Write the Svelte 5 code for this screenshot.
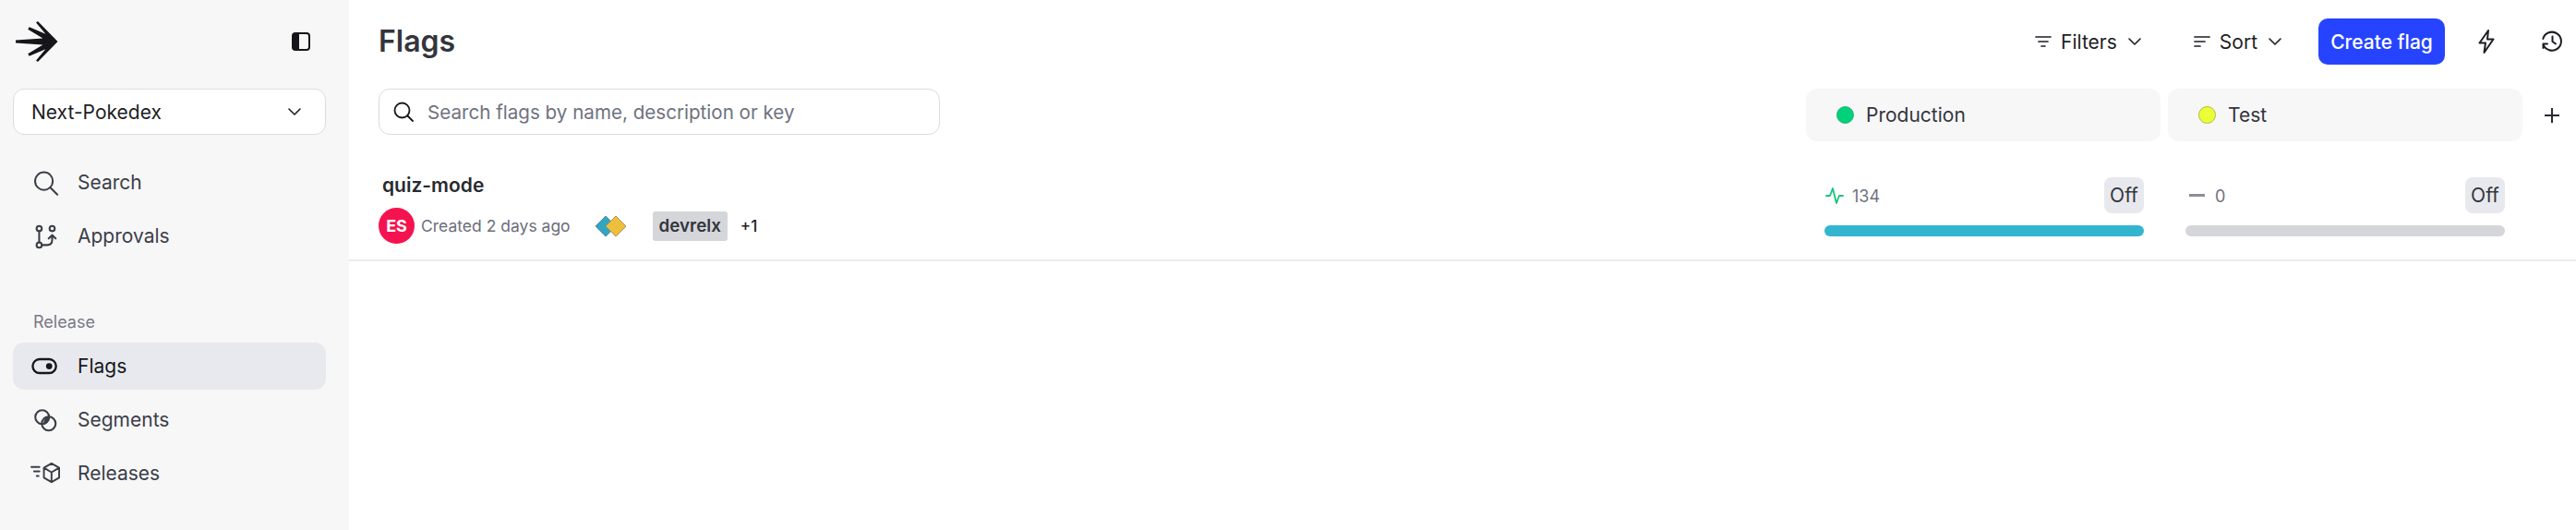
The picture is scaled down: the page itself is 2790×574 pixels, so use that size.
<script>
  const topNav = [
    { label: 'Search', icon: 'search' },
    { label: 'Approvals', icon: 'approvals' }
  ];
  const releaseNav = [
    { label: 'Flags', icon: 'flags', active: true },
    { label: 'Segments', icon: 'segments' },
    { label: 'Releases', icon: 'releases' }
  ];
</script>

{#snippet navIcon(name)}
  {#if name === 'search'}
    <svg class="nav-icon" viewBox="0 0 32 32" fill="none" stroke="currentColor" stroke-width="2.2" stroke-linecap="round">
      <circle cx="14.5" cy="14" r="10.2" />
      <path d="M22 21.5l8 8" />
    </svg>
  {:else if name === 'approvals'}
    <svg class="nav-icon" viewBox="0 0 32 32" fill="none" stroke="currentColor" stroke-width="2.2" stroke-linecap="round" stroke-linejoin="round">
      <circle cx="9" cy="7" r="3" />
      <circle cx="9" cy="26" r="3" />
      <circle cx="24" cy="7" r="3" />
      <path d="M9 10v13M12 26h6c4 0 6-2.500 6-6v-5M20 18.500l4-4 4 4" />
    </svg>
  {:else if name === 'flags'}
    <svg class="nav-icon" viewBox="0 0 32 32" fill="none" stroke="currentColor" stroke-width="2.500">
      <rect x="1.500" y="7.500" width="27" height="16" rx="8" />
      <circle cx="20.500" cy="15.500" r="3.600" fill="currentColor" stroke="none" />
    </svg>
  {:else if name === 'segments'}
    <svg class="nav-icon" viewBox="0 0 32 32" fill="none" stroke="currentColor" stroke-width="2.200">
      <circle cx="12.500" cy="12.500" r="8" />
      <circle cx="20" cy="20" r="8" />
      <path d="M14 20.500c3.500 0 6.500-3 6.500-8.500-3.500 0-6.500 3-6.500 8.500z" fill="currentColor" stroke="none" />
    </svg>
  {:else if name === 'releases'}
    <svg class="nav-icon wide" viewBox="0 0 34 32" fill="none" stroke="currentColor" stroke-width="2" stroke-linecap="round" stroke-linejoin="round">
      <path d="M1 9h9M4 14h6M7 19h2" />
      <path d="M23.500 5l8.500 5v11l-8.500 5-8.500-5V10zM15 10l8.500 5 8.500-5M23.500 15v11" />
    </svg>
  {/if}
{/snippet}

{#snippet chevron()}
  <svg class="chevron" viewBox="0 0 16 10" fill="none" stroke="currentColor" stroke-width="1.600" stroke-linecap="round" stroke-linejoin="round">
    <path d="M2 2l6 6 6-6" />
  </svg>
{/snippet}

<div class="app">
  <aside class="sidebar">
    <div class="brand">
      <svg class="logo" viewBox="0 0 48 46" fill="#16161a">
        <path d="M46.500 23L24.500 0.500 22.500 2 33 14.500 15 7 13.500 9.500 30 19.500 0 21.500 0 24.500 30 26.500 13.500 36.500 15 39 33 31.500 22.500 44 24.500 45.500z" />
      </svg>
      <svg class="collapse" viewBox="0 0 20 20" fill="none" stroke="#16161a" stroke-width="2">
        <rect x="1" y="1" width="18" height="18" rx="3" />
        <path d="M1 4a3 3 0 0 1 3-3h4v18H4a3 3 0 0 1-3-3z" fill="#16161a" stroke="none" />
      </svg>
    </div>

    <button class="project" type="button">
      <span>Next-Pokedex</span>
      {@render chevron()}
    </button>

    <nav class="nav first">
      {#each topNav as item}
        <div class="nav-item">
          <span class="icon-slot">{@render navIcon(item.icon)}</span>
          <span>{item.label}</span>
        </div>
      {/each}
    </nav>

    <div class="section-label">Release</div>
    <nav class="nav">
      {#each releaseNav as item}
        <div class="nav-item" class:active={item.active}>
          <span class="icon-slot">{@render navIcon(item.icon)}</span>
          <span>{item.label}</span>
        </div>
      {/each}
    </nav>
  </aside>

  <main class="content">
    <header class="page-header">
      <h1>Flags</h1>
      <div class="actions">
        <button class="ghost filters" type="button">
          <svg class="tool-icon" viewBox="0 0 18 14" fill="none" stroke="currentColor" stroke-width="1.700" stroke-linecap="round">
            <path d="M1 2h16M4 7h10M7 12h4" />
          </svg>
          <span>Filters</span>
          {@render chevron()}
        </button>
        <button class="ghost sort" type="button">
          <svg class="tool-icon" viewBox="0 0 18 14" fill="none" stroke="currentColor" stroke-width="1.700" stroke-linecap="round">
            <path d="M1 2h16M1 7h11M1 12h6" />
          </svg>
          <span>Sort</span>
          {@render chevron()}
        </button>
        <button class="create" type="button">Create flag</button>
        <svg class="bolt" viewBox="0 0 18 26" fill="none" stroke="#1d1e23" stroke-width="2" stroke-linejoin="round">
          <path d="M11 1L1.500 14.500H8L6.500 25 16.500 10.500H10z" />
        </svg>
        <svg class="history" viewBox="0 0 24 24" fill="none" stroke="#1d1e23" stroke-width="2" stroke-linecap="round" stroke-linejoin="round">
          <path d="M2.500 15a10 10 0 1 0-.2-6M2.500 19v-4.500H7M12.500 6.500V12l3.500 2.500" />
        </svg>
      </div>
    </header>

    <div class="toolbar">
      <div class="search">
        <svg class="search-icon" viewBox="0 0 22 22" fill="none" stroke="#16161a" stroke-width="1.800" stroke-linecap="round">
          <circle cx="9.500" cy="9.500" r="8" />
          <path d="M15.500 15.500l5.500 5.500" />
        </svg>
        <span>Search flags by name, description or key</span>
      </div>
      <div class="env-tabs">
        <div class="env-tab">
          <span class="dot green"></span>
          <span>Production</span>
        </div>
        <div class="env-tab">
          <span class="dot yellow"></span>
          <span>Test</span>
        </div>
        <svg class="plus" viewBox="0 0 18 18" fill="none" stroke="#282a30" stroke-width="2">
          <path d="M9 1v16M1 9h16" />
        </svg>
      </div>
    </div>

    <section class="flag-row">
      <div class="flag-info">
        <div class="flag-name">quiz-mode</div>
        <div class="flag-meta">
          <span class="avatar">ES</span>
          <span class="created">Created 2 days ago</span>
          <svg class="diamonds" viewBox="0 0 34 24">
            <path d="M11.500 1L23 12 11.500 23 0.500 12z" fill="#33a5c4" stroke="#5f8894" />
            <path d="M22.500 1L33.500 12 22.500 23 11.500 12z" fill="#eebf3c" stroke="#a59155" />
          </svg>
          <span class="tag">devrelx</span>
          <span class="more">+1</span>
        </div>
      </div>

      <div class="env-status">
        <div class="status-cell">
          <div class="status-top">
            <svg class="pulse" viewBox="0 0 20 20" fill="none" stroke="#19c37d" stroke-width="1.800" stroke-linejoin="round" stroke-linecap="round">
              <path d="M1 10h4l3-8 4 16 3-8h4" />
            </svg>
            <span class="count">134</span>
            <span class="off">Off</span>
          </div>
          <div class="bar on"></div>
        </div>
        <div class="status-cell">
          <div class="status-top">
            <span class="dash"></span>
            <span class="count">0</span>
            <span class="off">Off</span>
          </div>
          <div class="bar"></div>
        </div>
      </div>
    </section>
  </main>
</div>

<style>
  :global(body) {
    margin: 0;
    background: #fff;
  }

  .app {
    display: flex;
    height: 574px;
    font-family: Inter, "Liberation Sans", sans-serif;
    color: #282a30;
    overflow: hidden;
  }

  .sidebar {
    width: 378px;
    flex-shrink: 0;
    background: #f7f7f8;
    padding: 0 25px 0 14px;
    box-sizing: border-box;
  }

  .brand {
    display: flex;
    align-items: center;
    justify-content: space-between;
    height: 96px;
    padding: 0 17px 6px 3px;
    box-sizing: border-box;
  }

  .logo {
    width: 47px;
    height: 46px;
  }

  .collapse {
    width: 20px;
    height: 20px;
  }

  .project {
    display: flex;
    align-items: center;
    justify-content: space-between;
    width: 100%;
    height: 50px;
    padding: 0 25px 0 19px;
    background: #fff;
    border: 1.500px solid #dcdcdf;
    border-radius: 12px;
    font: 400 21px Inter, sans-serif;
    color: #1d1e23;
    box-sizing: border-box;
  }

  .chevron {
    width: 16px;
    height: 10px;
  }

  .project .chevron {
    color: #1d1e23;
  }

  .nav {
    display: flex;
    flex-direction: column;
    gap: 7px;
  }

  .nav.first {
    margin-top: 26px;
  }

  .nav-item {
    display: flex;
    align-items: center;
    height: 51px;
    border-radius: 12px;
    font-size: 21px;
    color: #3b3e47;
  }

  .nav-item.active {
    background: #e8e9ee;
    color: #16171b;
  }

  .icon-slot {
    display: flex;
    justify-content: center;
    align-items: center;
    width: 70px;
    flex-shrink: 0;
    margin-right: 0;
  }

  .nav-icon {
    width: 30px;
    height: 30px;
  }

  .nav-icon.wide {
    width: 33px;
    height: 31px;
  }

  .section-label {
    margin: 55px 0 0 22px;
    height: 35px;
    font-size: 18px;
    line-height: 26px;
    color: #777a85;
  }

  .content {
    flex: 1;
    min-width: 0;
  }

  .page-header {
    display: flex;
    align-items: center;
    justify-content: space-between;
    height: 90px;
    padding: 0 14px 0 32px;
    box-sizing: border-box;
  }

  h1 {
    margin: 0 0 2px;
    font-size: 32px;
    font-weight: 600;
    color: #33353c;
  }

  .actions {
    display: flex;
    align-items: center;
  }

  .ghost {
    display: flex;
    align-items: center;
    padding: 0;
    background: none;
    border: none;
    font: 400 21px Inter, sans-serif;
    color: #1d1e23;
  }

  .tool-icon {
    width: 18px;
    height: 14px;
    margin-right: 10px;
  }

  .ghost .chevron {
    margin-left: 11px;
  }

  .filters {
    margin-right: 56px;
  }

  .sort {
    margin-right: 39px;
  }

  .create {
    width: 137px;
    height: 50px;
    padding: 0;
    background: #2644ff;
    border: none;
    border-radius: 10px;
    font: 500 21px Inter, sans-serif;
    color: #fff;
  }

  .bolt {
    width: 18px;
    height: 26px;
    margin: 0 50px 0 36px;
  }

  .history {
    width: 24px;
    height: 24px;
  }

  .toolbar {
    display: flex;
    justify-content: space-between;
    align-items: flex-start;
    padding: 6px 17px 0 32px;
  }

  .search {
    display: flex;
    align-items: center;
    width: 608px;
    height: 50px;
    padding-left: 15px;
    border: 1.500px solid #dcdcdf;
    border-radius: 12px;
    font-size: 20.600px;
    color: #6f7280;
    box-sizing: border-box;
  }

  .search-icon {
    width: 22px;
    height: 22px;
    margin-right: 15px;
    flex-shrink: 0;
  }

  .env-tabs {
    display: flex;
    align-items: center;
    gap: 8px;
  }

  .env-tab {
    display: flex;
    align-items: center;
    gap: 13px;
    width: 384px;
    height: 57px;
    padding-left: 33px;
    background: #f7f7f8;
    border-radius: 12px;
    font-size: 21px;
    color: #33353c;
    box-sizing: border-box;
  }

  .dot {
    width: 19px;
    height: 19px;
    border-radius: 50%;
    box-sizing: border-box;
  }

  .dot.green {
    background: #00d17a;
    border: 1px solid #1fb574;
  }

  .dot.yellow {
    background: #eaff37;
    border: 1.500px solid #b4bb3c;
  }

  .plus {
    width: 18px;
    height: 18px;
    margin-left: 15px;
  }

  .flag-row {
    display: flex;
    justify-content: space-between;
    height: 130px;
    padding: 0 77px 0 32px;
    border-bottom: 2px solid #ebebee;
    box-sizing: border-box;
  }

  .flag-name {
    margin: 37px 0 0 4px;
    font-size: 21px;
    line-height: 22px;
    font-weight: 600;
    color: #282a30;
  }

  .flag-meta {
    display: flex;
    align-items: center;
    margin-top: 13px;
  }

  .avatar {
    display: flex;
    align-items: center;
    justify-content: center;
    width: 39px;
    height: 39px;
    border-radius: 50%;
    background: #f5134f;
    font-size: 18px;
    font-weight: 700;
    color: #fff;
  }

  .created {
    margin-left: 7px;
    font-size: 17.500px;
    color: #6b6e7b;
  }

  .diamonds {
    width: 35px;
    height: 24px;
    margin-left: 26px;
  }

  .tag {
    margin-left: 28px;
    padding: 0 7px;
    height: 32px;
    line-height: 32px;
    background: #d5d6da;
    border-radius: 3px;
    font-size: 18.800px;
    font-weight: 600;
    color: #33353c;
  }

  .more {
    margin-left: 14px;
    font-size: 17px;
    font-weight: 500;
    color: #1d1e23;
  }

  .env-status {
    display: flex;
    gap: 45px;
    padding-top: 39px;
  }

  .status-cell {
    width: 346px;
  }

  .status-top {
    display: flex;
    align-items: center;
    height: 39px;
    margin-bottom: 13px;
  }

  .pulse {
    width: 20px;
    height: 20px;
    margin: 0 9px 0 1px;
  }

  .dash {
    width: 17px;
    height: 2.500px;
    background: #8c8e98;
    margin: 0 11px 0 4px;
  }

  .count {
    font-size: 18px;
    color: #6f7280;
    padding-top: 2px;
  }

  .off {
    margin-left: auto;
    width: 43px;
    height: 39px;
    line-height: 39px;
    text-align: center;
    background: #e8e9ee;
    border-radius: 8px;
    font-size: 21px;
    color: #33353c;
  }

  .bar {
    height: 12px;
    border-radius: 6px;
    background: #d5d6da;
  }

  .bar.on {
    background: #33b5d0;
  }
</style>
